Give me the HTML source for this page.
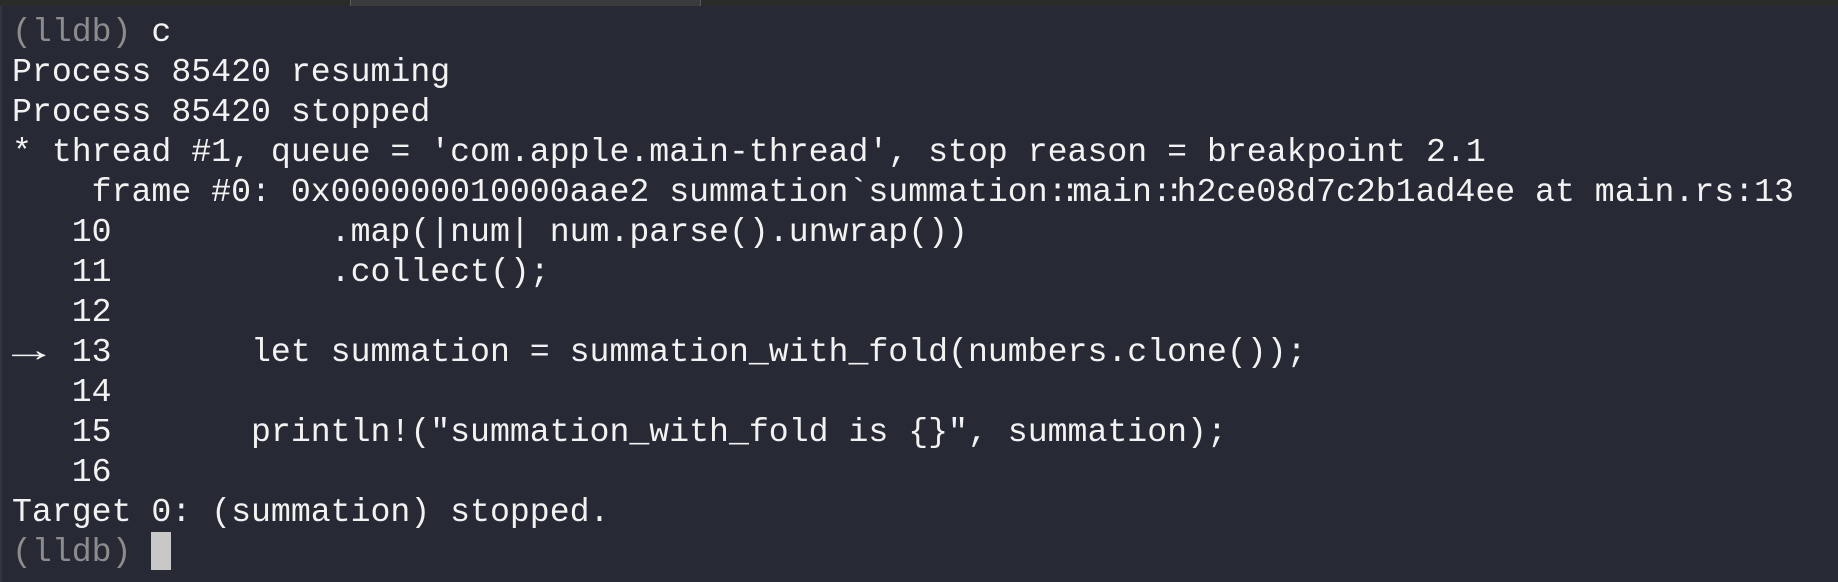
<!DOCTYPE html>
<html><head><meta charset="utf-8"><style>
html,body{margin:0;padding:0;}
body{width:1838px;height:582px;background:#272935;overflow:hidden;position:relative;}
.top{position:absolute;left:0;top:0;width:1838px;height:6px;background:#2a2b2b;}
.tab{position:absolute;left:350px;top:0;width:351px;height:6px;background:#3a3b3c;border-left:1px solid #5a5a5a;border-right:1px solid #5a5a5a;box-sizing:border-box;}
.lb{position:absolute;left:0;top:6px;width:2px;height:576px;background:#34363f;}
pre{position:absolute;left:12px;top:12px;margin:0;font-family:"Liberation Mono","DejaVu Sans Mono",monospace;font-size:33.2px;line-height:40px;color:#f2f2f2;letter-spacing:0;}
.g{color:#8c8c8c;}
.c{letter-spacing:-7.6px;}
.a{display:inline-block;width:2ch;text-align:left;transform:scaleX(1.7);transform-origin:left center;font-weight:bold;}
.cur{display:inline-block;width:20px;height:38px;background:#c8c8c8;vertical-align:-9px;}
</style></head><body>
<div class="top"></div><div class="tab"></div><div class="lb"></div>
<pre><span class="g">(lldb)</span> c
Process 85420 resuming
Process 85420 stopped
* thread #1, queue = 'com.apple.main-thread', stop reason = breakpoint 2.1
    frame #0: 0x000000010000aae2 summation`summation<span class="c">::</span>main<span class="c">::</span>h2ce08d7c2b1ad4ee at main.rs:13
   10           .map(|num| num.parse().unwrap())
   11           .collect();
   12
<span class="a">→</span> 13       let summation = summation_with_fold(numbers.clone());
   14
   15       println!("summation_with_fold is {}", summation);
   16
Target 0: (summation) stopped.
<span class="g">(lldb)</span> <span class="cur"></span></pre>
</body></html>
